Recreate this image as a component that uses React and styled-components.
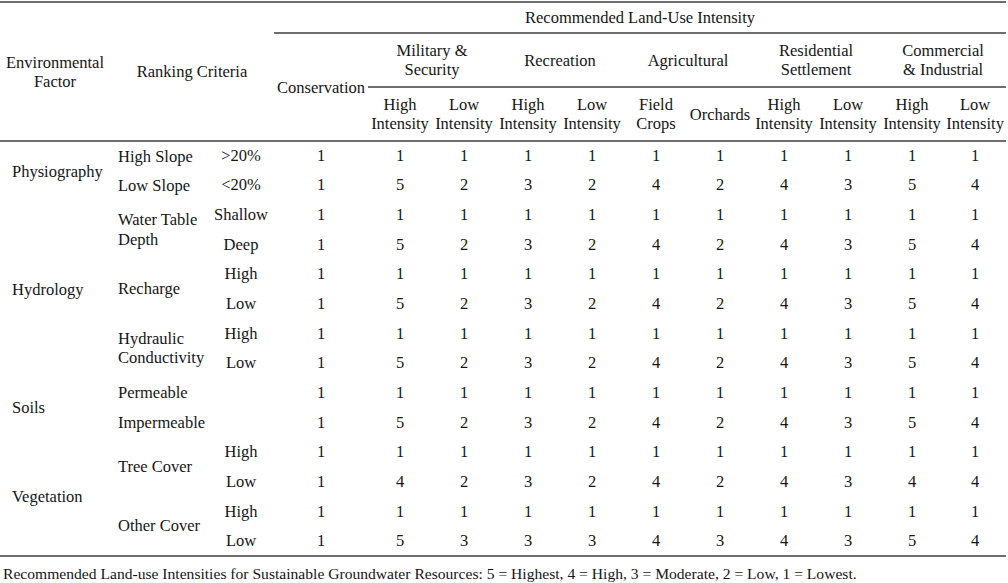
import React from "react";
import styled, { createGlobalStyle } from "styled-components";

const GlobalStyle = createGlobalStyle`
  html, body {
    margin: 0;
    padding: 0;
    background: #fff;
  }
  body {
    font-family: "Liberation Serif", "Times New Roman", serif;
    color: #151515;
  }
`;

const SERIF = `"Liberation Serif", "Times New Roman", serif`;
const RULE = "2px solid #6e6e6e";

const Page = styled.div`
  width: 1008px;
  height: 583px;
  padding: 1px 2px 0 0;
  box-sizing: border-box;
  overflow: hidden;
  font-family: ${SERIF};
`;

const Table = styled.table`
  width: 1006px;
  border-collapse: collapse;
  table-layout: fixed;
  font-family: ${SERIF};
  font-size: 16.5px;
  color: #151515;
  border-top: ${RULE};
  border-bottom: ${RULE};
`;

const Head = styled.thead`
  border-bottom: ${RULE};
`;

const Th = styled.th`
  font-weight: normal;
  text-align: center;
  vertical-align: middle;
  line-height: 19px;
  padding: 0;
  white-space: nowrap;
  border-bottom: ${(p) => (p.$rule ? RULE : "none")};
`;

const TopRow = styled.tr`
  height: 31px;
`;

const GroupRow = styled.tr`
  height: 54px;
`;

const SubRow = styled.tr`
  height: 54px;
`;

const BodyRow = styled.tr`
  height: 29.65px;
`;

const Factor = styled.td`
  padding: 0 0 0 12px;
  vertical-align: middle;
  line-height: 19px;
`;

const Criterion = styled.td`
  padding: 0 0 0 8px;
  vertical-align: middle;
  line-height: 19.5px;
  white-space: nowrap;
`;

const Sub = styled.td`
  padding: 0;
  text-align: center;
  vertical-align: middle;
`;

const Value = styled.td`
  padding: 0;
  text-align: center;
  vertical-align: middle;
`;

const Note = styled.p`
  margin: 8px 0 0 3px;
  font-family: ${SERIF};
  font-size: 15.6px;
  color: #151515;
  white-space: nowrap;
`;

const groups = [
  ["Military &", "Security"],
  ["Recreation"],
  ["Agricultural"],
  ["Residential", "Settlement"],
  ["Commercial", "& Industrial"],
];

const subHeads = [
  ["High", "Intensity"],
  ["Low", "Intensity"],
  ["High", "Intensity"],
  ["Low", "Intensity"],
  ["Field", "Crops"],
  ["Orchards"],
  ["High", "Intensity"],
  ["Low", "Intensity"],
  ["High", "Intensity"],
  ["Low", "Intensity"],
];

const ONES = [1, 1, 1, 1, 1, 1, 1, 1, 1, 1, 1];
const LOWS = [1, 5, 2, 3, 2, 4, 2, 4, 3, 5, 4];

const rows = [
  { factor: "Physiography", span: 2, crit: ["High Slope"], critSpan: 1, sub: ">20%", vals: ONES },
  { crit: ["Low Slope"], critSpan: 1, sub: "<20%", vals: LOWS },
  { factor: "Hydrology", span: 6, crit: ["Water Table", "Depth"], critSpan: 2, sub: "Shallow", vals: ONES },
  { sub: "Deep", vals: LOWS },
  { crit: ["Recharge"], critSpan: 2, sub: "High", vals: ONES },
  { sub: "Low", vals: LOWS },
  { crit: ["Hydraulic", "Conductivity"], critSpan: 2, sub: "High", vals: ONES },
  { sub: "Low", vals: LOWS },
  { factor: "Soils", span: 2, crit: ["Permeable"], critSpan: 1, sub: "", vals: ONES },
  { crit: ["Impermeable"], critSpan: 1, sub: "", vals: LOWS },
  { factor: "Vegetation", span: 4, crit: ["Tree Cover"], critSpan: 2, sub: "High", vals: ONES },
  { sub: "Low", vals: [1, 4, 2, 3, 2, 4, 2, 4, 3, 4, 4] },
  { crit: ["Other Cover"], critSpan: 2, sub: "High", vals: ONES },
  { sub: "Low", vals: [1, 5, 3, 3, 3, 4, 3, 4, 3, 5, 4] },
];

const Lines = ({ parts }) =>
  parts.map((t, i) => (
    <React.Fragment key={i}>
      {i > 0 && <br />}
      {t}
    </React.Fragment>
  ));

export default function App() {
  return (
    <Page>
      <GlobalStyle />
      <Table>
        <colgroup>
          <col style={{ width: 110 }} />
          <col style={{ width: 98 }} />
          <col style={{ width: 66 }} />
          <col style={{ width: 94 }} />
          {subHeads.map((_, i) => (
            <col key={i} style={{ width: i === 9 ? 62 : 64 }} />
          ))}
        </colgroup>
        <Head>
          <TopRow>
            <Th rowSpan={3}>
              Environmental
              <br />
              Factor
            </Th>
            <Th rowSpan={3} colSpan={2}>
              Ranking Criteria
            </Th>
            <Th colSpan={11} $rule>
              Recommended Land-Use Intensity
            </Th>
          </TopRow>
          <GroupRow>
            <Th rowSpan={2}>Conservation</Th>
            {groups.map((g, i) => (
              <Th key={i} colSpan={2} $rule>
                <Lines parts={g} />
              </Th>
            ))}
          </GroupRow>
          <SubRow>
            {subHeads.map((s, i) => (
              <Th key={i}>
                <Lines parts={s} />
              </Th>
            ))}
          </SubRow>
        </Head>
        <tbody>
          {rows.map((r, i) => (
            <BodyRow key={i}>
              {r.factor && <Factor rowSpan={r.span}>{r.factor}</Factor>}
              {r.crit && (
                <Criterion rowSpan={r.critSpan}>
                  <Lines parts={r.crit} />
                </Criterion>
              )}
              <Sub>{r.sub}</Sub>
              {r.vals.map((v, j) => (
                <Value key={j}>{v}</Value>
              ))}
            </BodyRow>
          ))}
        </tbody>
      </Table>
      <Note>
        Recommended Land-use Intensities for Sustainable Groundwater Resources: 5 = Highest, 4 = High, 3 =
        Moderate, 2 = Low, 1 = Lowest.
      </Note>
    </Page>
  );
}
